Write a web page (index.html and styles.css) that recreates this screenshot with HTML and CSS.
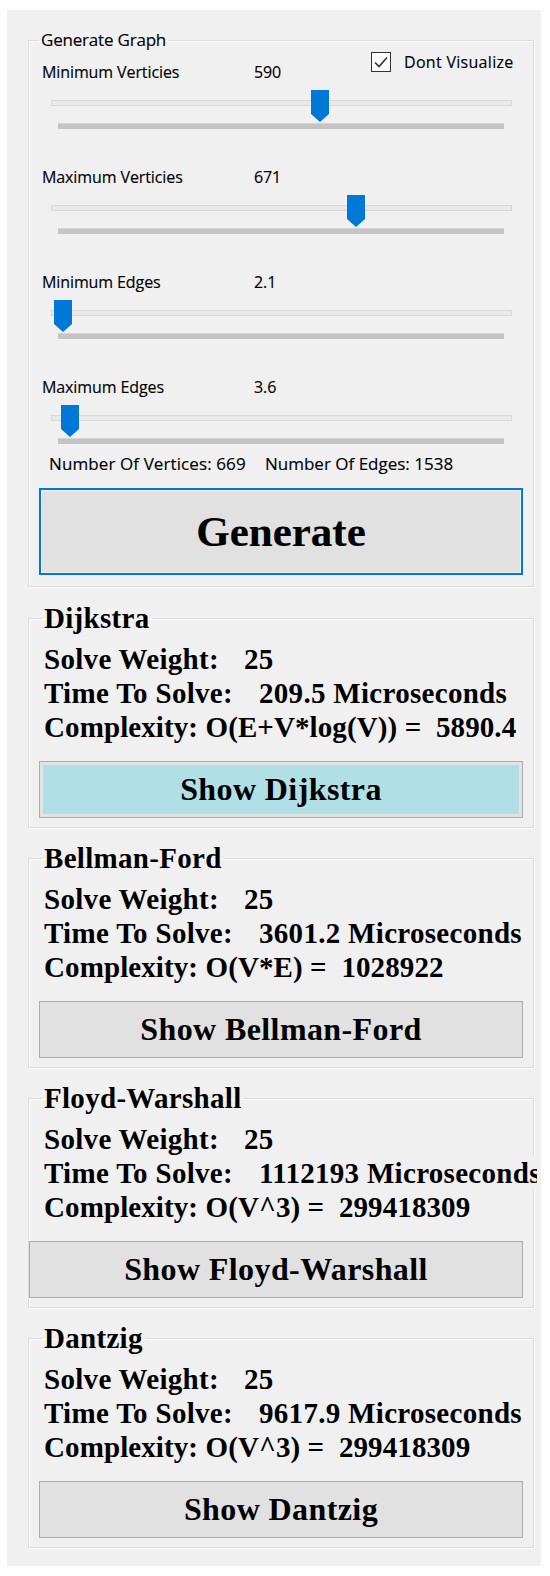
FILE: index.html
```html
<!DOCTYPE html>
<html>
<head>
<meta charset="utf-8">
<title>Shortest Paths</title>
<link rel="stylesheet" href="styles.css">
</head>
<body>
<div class="panel">
  <fieldset class="group gen">
    <legend class="gen-title">Generate Graph</legend>

    <div class="setting">
      <div class="setting-row">
        <span class="setting-name">Minimum Verticies</span>
        <span class="setting-value">590</span>
        <label class="check">
          <span class="check-box"><svg viewBox="0 0 20 20" width="20" height="20"><path d="M4 10.5 L8 14.5 L16 5.5" fill="none" stroke="#333" stroke-width="1.6"/></svg></span>
          <span class="check-text">Dont Visualize</span>
        </label>
      </div>
      <div class="slider">
        <div class="track"></div>
        <div class="ticks"></div>
        <svg class="thumb" style="left:260px" viewBox="0 0 18 32" width="18" height="32"><path d="M0 0H18V24L9 32L0 24Z" fill="#0078d7"/></svg>
      </div>
    </div>

    <div class="setting">
      <div class="setting-row">
        <span class="setting-name">Maximum Verticies</span>
        <span class="setting-value">671</span>
      </div>
      <div class="slider">
        <div class="track"></div>
        <div class="ticks"></div>
        <svg class="thumb" style="left:296px" viewBox="0 0 18 32" width="18" height="32"><path d="M0 0H18V24L9 32L0 24Z" fill="#0078d7"/></svg>
      </div>
    </div>

    <div class="setting">
      <div class="setting-row">
        <span class="setting-name">Minimum Edges</span>
        <span class="setting-value">2.1</span>
      </div>
      <div class="slider">
        <div class="track"></div>
        <div class="ticks"></div>
        <svg class="thumb" style="left:3px" viewBox="0 0 18 32" width="18" height="32"><path d="M0 0H18V24L9 32L0 24Z" fill="#0078d7"/></svg>
      </div>
    </div>

    <div class="setting">
      <div class="setting-row">
        <span class="setting-name">Maximum Edges</span>
        <span class="setting-value">3.6</span>
      </div>
      <div class="slider">
        <div class="track"></div>
        <div class="ticks"></div>
        <svg class="thumb" style="left:10px" viewBox="0 0 18 32" width="18" height="32"><path d="M0 0H18V24L9 32L0 24Z" fill="#0078d7"/></svg>
      </div>
    </div>

    <div class="counts">
      <span class="count-v">Number Of Vertices: 669</span>
      <span class="count-e">Number Of Edges: 1538</span>
    </div>

    <button class="btn btn-generate">Generate</button>
  </fieldset>

  <fieldset class="group algo">
    <legend class="algo-title">Dijkstra</legend>
    <div class="line"><span class="lbl-w">Solve Weight:</span>25</div>
    <div class="line"><span class="lbl-t">Time To Solve:</span>209.5 Microseconds</div>
    <div class="line line-cx">Complexity: O(E+V*log(V)) =  5890.4</div>
    <button class="btn btn-show btn-active">Show Dijkstra</button>
  </fieldset>

  <fieldset class="group algo">
    <legend class="algo-title">Bellman-Ford</legend>
    <div class="line"><span class="lbl-w">Solve Weight:</span>25</div>
    <div class="line"><span class="lbl-t">Time To Solve:</span>3601.2 Microseconds</div>
    <div class="line line-cx">Complexity: O(V*E) =  1028922</div>
    <button class="btn btn-show">Show Bellman-Ford</button>
  </fieldset>

  <fieldset class="group algo">
    <legend class="algo-title">Floyd-Warshall</legend>
    <div class="line"><span class="lbl-w">Solve Weight:</span>25</div>
    <div class="line line-wide"><span class="lbl-t">Time To Solve:</span>1112193 Microseconds</div>
    <div class="line line-cx">Complexity: O(V^3) =  299418309</div>
    <button class="btn btn-show btn-wide">Show Floyd-Warshall</button>
  </fieldset>

  <fieldset class="group algo">
    <legend class="algo-title">Dantzig</legend>
    <div class="line"><span class="lbl-w">Solve Weight:</span>25</div>
    <div class="line"><span class="lbl-t">Time To Solve:</span>9617.9 Microseconds</div>
    <div class="line line-cx">Complexity: O(V^3) =  299418309</div>
    <button class="btn btn-show">Show Dantzig</button>
  </fieldset>
</div>
</body>
</html>
```

FILE: styles.css
```css
html, body {
  margin: 0;
  padding: 0;
  background: #ffffff;
}

.panel {
  margin: 10px 0 0 7px;
  width: 534px;
  height: 1556px;
  box-sizing: border-box;
  padding: 20px 7px 0 21px;
  background: #f0f0f0;
  display: flex;
  flex-direction: column;
  color: #000;
}

.group {
  margin: 0;
  min-width: 0;
  border: 1px solid #dcdcdc;
  box-shadow: inset 1px 1px 0 #fbfbfb, 1px 1px 0 #fbfbfb;
}

/* ---------- Generate Graph ---------- */
.gen {
  padding: 12px 10px 11px 13px;
  font-family: "Open Sans", "Noto Sans", sans-serif;
  font-size: 16px;
  letter-spacing: -0.1px;
  -webkit-text-stroke: 0.15px #000;
}

.gen-title {
  margin-left: -3px;
  padding: 0 2px;
  line-height: 20px;
  font-size: 17px;
  letter-spacing: -0.2px;
}

.setting {
  display: flex;
  flex-direction: column;
  margin-bottom: 39px;
}

.setting:nth-of-type(4) {
  margin-bottom: 0;
}

.setting-row {
  display: flex;
  height: 20px;
  line-height: 20px;
  white-space: nowrap;
}

.setting-name {
  width: 212px;
}

.setting-value {
  width: 117px;
}

.check {
  display: flex;
  align-items: center;
  gap: 13px;
  height: 20px;
  margin-top: -10px;
}

.check-text {
  letter-spacing: 0.3px;
}

.check-box {
  width: 20px;
  height: 20px;
  box-sizing: border-box;
  border: 1px solid #333;
  background: #fff;
  display: flex;
  align-items: center;
  justify-content: center;
}

.check-box svg {
  display: block;
  margin: -1px;
}

.slider {
  position: relative;
  margin: 8px 0 0 9px;
  width: 461px;
  height: 38px;
}

.track {
  margin-top: 10px;
  height: 6px;
  box-sizing: border-box;
  border: 1px solid #d9d9d9;
  background: #e9e9e9;
}

.ticks {
  margin: 17px 0 0 7px;
  width: 446px;
  height: 6px;
  background: #c4c4c4;
  border-top: 1px solid #d4d4d4;
  box-sizing: border-box;
}

.thumb {
  position: absolute;
  top: 0;
  display: block;
}

.counts {
  display: flex;
  margin-top: 11px;
  padding-left: 7px;
  height: 20px;
  line-height: 20px;
  white-space: nowrap;
  font-size: 17px;
}

.count-v {
  width: 216px;
  letter-spacing: 0.1px;
}

.count-e {
  letter-spacing: 0;
}

.btn {
  display: block;
  box-sizing: border-box;
  margin: 0;
  padding: 0;
  font-family: "Liberation Serif", "Times New Roman", serif;
  font-weight: bold;
  color: #000;
  background: #e1e1e1;
  border: 1px solid #adadad;
  text-align: center;
}

.btn-generate {
  margin: 14px 0 0 -3px;
  width: 484px;
  height: 87px;
  font-size: 43px;
  border: 2px solid #0078d7;
  box-shadow: inset 0 0 0 1px #f2f2f2;
}

/* ---------- Algorithm groups ---------- */
.algo {
  margin-top: 15px;
  padding: 9px 10px 9px 15px;
  font-family: "Liberation Serif", "Times New Roman", serif;
  font-weight: bold;
  font-size: 29px;
  letter-spacing: 0.3px;
}

.gen + .algo {
  margin-top: 16px;
}

.algo-title {
  margin-left: -2px;
  padding: 0 2px;
  line-height: 30px;
}

.line {
  height: 34px;
  line-height: 34px;
  white-space: pre;
}

.line-cx {
  letter-spacing: 0.1px;
}

.line-wide {
  width: 493px;
  overflow: hidden;
  position: relative;
  background: #f0f0f0;
}

.lbl-w {
  display: inline-block;
  width: 200px;
}

.lbl-t {
  display: inline-block;
  width: 215px;
}

.btn-show {
  margin: 17px 0 0 -5px;
  width: 484px;
  height: 57px;
  font-size: 32px;
  letter-spacing: 0.4px;
}

.btn-wide {
  margin-left: -15px;
  width: 494px;
}

.btn-active {
  background: #b0e0e6;
  box-shadow: inset 0 0 0 3px #e3e3e3;
}
```
